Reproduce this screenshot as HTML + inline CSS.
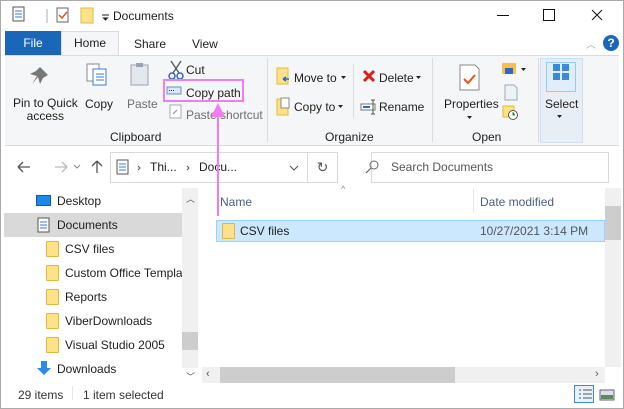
<!DOCTYPE html>
<html><head><meta charset="utf-8"><style>
*{margin:0;padding:0;box-sizing:border-box}
body{width:624px;height:409px;overflow:hidden;background:#fff;font-family:"Liberation Sans",sans-serif;font-size:12px;color:#1e1e1e;position:relative}
.a{position:absolute;white-space:nowrap}
.f{position:absolute;width:13px;height:16px;background:#fde28a;border:1px solid #e2b93e;border-radius:1px}
.g{color:#6d6d6d}
</style></head><body>
<div class="a" style="left:0;top:0;width:624px;height:409px;border:1px solid #aaa"></div>
<!-- title bar -->
<svg class="a" style="left:12px;top:6px" width="100" height="20">
<rect x="1" y="1" width="11" height="14" fill="#fff" stroke="#555"/><path d="M3 5h7M3 8h7M3 11h7" stroke="#3a7bd5"/>
<line x1="35" y1="3" x2="35" y2="17" stroke="#aaa"/>
<rect x="45" y="2" width="11" height="14" fill="#fff" stroke="#666"/><path d="M47 9l3 3 5-6" stroke="#e2541b" stroke-width="1.5" fill="none"/>
<rect x="69" y="2" width="12" height="15" fill="#fde28a" stroke="#e2b93e"/>
<path d="M90 9h7M91.5 12h4l-2 2z" stroke="#222" fill="#222"/>
<line x1="105" y1="3" x2="105" y2="17" stroke="#aaa"/>
</svg>
<div class="a" style="left:113px;top:9px;font-size:12px">Documents</div>
<svg class="a" style="left:495px;top:8px" width="120" height="16">
<line x1="2" y1="7.5" x2="14" y2="7.5" stroke="#111"/>
<rect x="48.5" y="1.5" width="11" height="11" fill="none" stroke="#111"/>
<path d="M97 2l10 10M107 2l-10 10" stroke="#111"/>
</svg>
<!-- tabs -->
<div class="a" style="left:5px;top:31px;width:56px;height:24px;background:#1a66b8;color:#fff;text-align:center;line-height:24px">File</div>
<div class="a" style="left:61px;top:31px;width:58px;height:25px;background:#f5f6f7;border:1px solid #dadbdc;border-bottom:none;text-align:center;line-height:23px">Home</div>
<div class="a" style="left:134px;top:37px">Share</div>
<div class="a" style="left:192px;top:37px">View</div>
<div class="a" style="left:586px;top:36px;color:#aaa;font-size:10px">︿</div>
<div class="a" style="left:603px;top:35px;width:16px;height:16px;border-radius:50%;background:#1a66b8;color:#fff;font-weight:bold;font-size:12px;text-align:center;line-height:16px">?</div>
<!-- ribbon -->
<div class="a" style="left:5px;top:55px;width:614px;height:91px;background:#f5f6f7;border-top:1px solid #dadbdc;border-bottom:1px solid #dadbdc"></div>
<div class="a" style="left:267px;top:58px;width:1px;height:84px;background:#dadbdc"></div>
<div class="a" style="left:432px;top:58px;width:1px;height:84px;background:#dadbdc"></div>
<div class="a" style="left:538px;top:58px;width:1px;height:84px;background:#dadbdc"></div>
<div class="a" style="left:353px;top:64px;width:1px;height:54px;background:#dadbdc"></div>
<div class="a" style="left:540px;top:58px;width:43px;height:85px;background:#e8eef5;border:1px solid #cde0f3"></div>
<div class="a" style="left:546px;top:62px;width:30px;height:30px;border:1px solid #99c8f0;background:#e0eefb"></div>
<svg class="a" style="left:0;top:55px" width="624" height="90">
<path d="M40 12l8 8-5 3-3 6-2-7-6 7 5-8-7-2 6-3z" fill="#777"/>
<rect x="87" y="9" width="12" height="17" fill="#fff" stroke="#888"/><rect x="93" y="14" width="13" height="16" fill="#fff" stroke="#3a7bd5"/><path d="M96 19h8M96 22h8M96 25h8" stroke="#3a7bd5"/>
<rect x="131" y="10" width="17" height="20" fill="#e3e7ee" stroke="#9aa3b0"/><rect x="136" y="8" width="7" height="4" fill="#9aa3b0"/>
<circle cx="172" cy="21" r="3" fill="none" stroke="#2c6ac2" stroke-width="1.5"/><circle cx="180" cy="21" r="3" fill="none" stroke="#2c6ac2" stroke-width="1.5"/><path d="M171 6l8 12M181 6l-8 12" stroke="#555" stroke-width="1.3"/>
<rect x="167" y="32" width="14" height="7" fill="#d6e8fa" stroke="#6a8fb8"/><path d="M169 35.5h6" stroke="#335" stroke-dasharray="1 1"/>
<rect x="170" y="50" width="11" height="13" fill="#fff" stroke="#aaa"/><path d="M173 59l4-4" stroke="#888"/>
<rect x="277" y="13" width="11" height="16" fill="#fde28a" stroke="#e2b93e"/><path d="M283 24h6M283 24l3-2M283 24l3 2" stroke="#2c6ac2" stroke-width="1.5"/>
<path d="M341 21h5l-2.5 3z" fill="#222"/>
<rect x="277" y="44" width="11" height="16" fill="#fde28a" stroke="#e2b93e"/><rect x="281" y="43" width="8" height="10" fill="#fff" stroke="#888"/>
<path d="M338 50h5l-2.5 3z" fill="#222"/>
<path d="M364 16l10 10M374 16l-10 10" stroke="#e01a1a" stroke-width="3"/>
<path d="M416 21h5l-2.5 3z" fill="#222"/>
<rect x="361" y="49" width="14" height="6" fill="#fff" stroke="#777"/><rect x="363" y="51" width="7" height="2" fill="#2c6ac2"/><path d="M373 45v14M371 45h4M371 59h4" stroke="#555"/>
<path d="M460 10h15l4 4v21h-19z" fill="#fff" stroke="#888"/><path d="M464 24l4 4 7-8" stroke="#e2541b" stroke-width="2" fill="none"/>
<path d="M467 61h5l-2.5 3z" fill="#222"/>
<rect x="502" y="8" width="14" height="11" fill="#f1c34d"/><rect x="505" y="13" width="8" height="6" fill="#2c6ac2"/><path d="M521 13h5l-2.5 3z" fill="#222"/>
<path d="M505 30h9l3 3v12h-12z" fill="#eef2f7" stroke="#9ab"/>
<rect x="503" y="51" width="11" height="11" fill="#fde28a" stroke="#e2b93e"/><circle cx="513" cy="60" r="4.5" fill="#fff" stroke="#555"/><path d="M513 57v3h2" stroke="#2a9a3a"/>
<rect x="553" y="9" width="7" height="7" fill="#3a8ad8"/><rect x="562" y="9" width="7" height="7" fill="#3a8ad8"/><rect x="553" y="18" width="7" height="7" fill="#3a8ad8"/><rect x="562" y="18" width="7" height="7" fill="#3a8ad8"/>
<path d="M557 60h5l-2.5 3z" fill="#222"/>
</svg>
<div class="a" style="left:13px;top:97px;text-align:center;line-height:13px">Pin to Quick<br>access</div>
<div class="a" style="left:85px;top:97px">Copy</div>
<div class="a g" style="left:127px;top:97px">Paste</div>
<div class="a" style="left:186px;top:63px">Cut</div>
<div class="a" style="left:186px;top:86px">Copy path</div>
<div class="a g" style="left:186px;top:108px">Paste shortcut</div>
<div class="a" style="left:110px;top:130px">Clipboard</div>
<div class="a" style="left:294px;top:71px">Move to</div>
<div class="a" style="left:294px;top:100px">Copy to</div>
<div class="a" style="left:379px;top:71px">Delete</div>
<div class="a" style="left:379px;top:100px">Rename</div>
<div class="a" style="left:325px;top:130px">Organize</div>
<div class="a" style="left:444px;top:97px">Properties</div>
<div class="a" style="left:472px;top:130px">Open</div>
<div class="a" style="left:545px;top:97px">Select</div>
<!-- address bar -->
<svg class="a" style="left:10px;top:157px" width="100" height="20">
<path d="M8 10h12M8 10l5-5M8 10l5 5" stroke="#555" stroke-width="1.3" fill="none"/>
<path d="M45 10h12M57 10l-5-5M57 10l-5 5" stroke="#bbb" stroke-width="1.3" fill="none"/>
<path d="M64 8l3 3 3-3" stroke="#888" fill="none"/>
<path d="M87 16V4M87 4l-5 5M87 4l5 5" stroke="#555" stroke-width="1.3" fill="none"/>
</svg>
<div class="a" style="left:110px;top:152px;width:198px;height:31px;border:1px solid #d9d9d9"></div>
<div class="a" style="left:307px;top:152px;width:31px;height:31px;border:1px solid #d9d9d9;text-align:center;line-height:29px;color:#555;font-size:14px">↻</div>
<svg class="a" style="left:115px;top:158px" width="190" height="20">
<rect x="2" y="2" width="11" height="14" fill="#fff" stroke="#555"/><path d="M4 6h7M4 9h7M4 12h7" stroke="#3a7bd5"/>
<path d="M23 8l2 2-2 2M72 8l2 2-2 2" stroke="#555" fill="none"/>
<path d="M175 8l4 4 4-4" stroke="#555" fill="none"/>
</svg>
<div class="a" style="left:150px;top:160px">Thi...</div>
<div class="a" style="left:199px;top:160px">Docu...</div>
<div class="a" style="left:371px;top:152px;width:238px;height:31px;border:1px solid #d9d9d9"></div>
<svg class="a" style="left:364px;top:159px" width="16" height="16"><circle cx="10" cy="6" r="4" fill="none" stroke="#666"/><path d="M7 9l-5 5" stroke="#666" stroke-width="1.2"/></svg>
<div class="a" style="left:391px;top:160px;color:#555">Search Documents</div>
<!-- nav pane -->
<div class="a" style="left:4px;top:213px;width:178px;height:24px;background:#d9d9d9"></div>
<div class="a" style="left:36px;top:195px;width:15px;height:11px;background:#1e88e5;border:1px solid #0a5bb0"></div>
<div class="a" style="left:57px;top:194px">Desktop</div>
<svg class="a" style="left:37px;top:217px" width="14" height="16"><rect x="1" y="1" width="11" height="14" fill="#fff" stroke="#555"/><path d="M3 5h7M3 8h7M3 11h7" stroke="#3a7bd5"/></svg>
<div class="a" style="left:57px;top:218px">Documents</div>
<div class="f" style="left:46px;top:241px"></div><div class="a" style="left:65px;top:242px">CSV files</div>
<div class="f" style="left:46px;top:265px"></div><div class="a" style="left:65px;top:266px;width:117px;overflow:hidden">Custom Office Templates</div>
<div class="f" style="left:46px;top:289px"></div><div class="a" style="left:65px;top:290px">Reports</div>
<div class="f" style="left:46px;top:313px"></div><div class="a" style="left:65px;top:314px">ViberDownloads</div>
<div class="f" style="left:46px;top:337px"></div><div class="a" style="left:65px;top:338px">Visual Studio 2005</div>
<svg class="a" style="left:36px;top:360px" width="16" height="16"><path d="M5 1h6v7h4l-7 7-7-7h4z" fill="#2c8ae8"/></svg>
<div class="a" style="left:57px;top:362px">Downloads</div>
<div class="a" style="left:182px;top:188px;width:16px;height:180px;background:#f0f0f0"></div>
<div class="a" style="left:182px;top:332px;width:16px;height:18px;background:#cdcdcd"></div>
<div class="a" style="left:186px;top:192px;font-size:9px;color:#555">︿</div>
<div class="a" style="left:186px;top:370px;font-size:9px;color:#555">﹀</div>
<!-- content -->
<div class="a" style="left:220px;top:195px;color:#4c607a">Name</div>
<div class="a" style="left:341px;top:184px;color:#888;font-size:9px">^</div>
<div class="a" style="left:473px;top:189px;width:1px;height:24px;background:#e5e5e5"></div>
<div class="a" style="left:480px;top:195px;color:#4c607a">Date modified</div>
<div class="a" style="left:216px;top:220px;width:389px;height:22px;background:#cce8ff;border:1px solid #99d1ff"></div>
<div class="f" style="left:222px;top:223px"></div>
<div class="a" style="left:240px;top:224px">CSV files</div>
<div class="a" style="left:480px;top:224px;color:#555">10/27/2021 3:14 PM</div>
<div class="a" style="left:605px;top:188px;width:16px;height:179px;background:#f0f0f0"></div>
<div class="a" style="left:605px;top:206px;width:16px;height:34px;background:#cdcdcd"></div>
<div class="a" style="left:202px;top:367px;width:403px;height:16px;background:#f0f0f0"></div>
<div class="a" style="left:220px;top:367px;width:235px;height:16px;background:#cdcdcd"></div>
<div class="a" style="left:206px;top:368px;color:#555;font-size:11px">‹</div>
<div class="a" style="left:595px;top:368px;color:#555;font-size:11px">›</div>
<!-- status -->
<div class="a" style="left:18px;top:388px;color:#333">29 items</div>
<div class="a" style="left:72px;top:386px;width:1px;height:14px;background:#e5e5e5"></div>
<div class="a" style="left:83px;top:388px;color:#333">1 item selected</div>
<div class="a" style="left:574px;top:385px;width:20px;height:18px;border:1px solid #3a8ad8;background:#e5f1fb"></div>
<svg class="a" style="left:577px;top:388px" width="40" height="14"><path d="M2 2h2M2 6h2M2 10h2M6 2h9M6 6h9M6 10h9" stroke="#555"/><rect x="23" y="2" width="14" height="10" fill="#dde" stroke="#666"/><rect x="24" y="7" width="12" height="4" fill="#5a8a5a"/></svg>
<!-- pink annotation -->
<div class="a" style="left:163px;top:79px;width:81px;height:23px;border:2px solid #f07cf0"></div>
<div class="a" style="left:217px;top:112px;width:2px;height:104px;background:#f07cf0"></div>
<svg class="a" style="left:210px;top:102px" width="16" height="16"><path d="M8 1L1 15h14z" fill="#f07cf0"/></svg>
</body></html>
